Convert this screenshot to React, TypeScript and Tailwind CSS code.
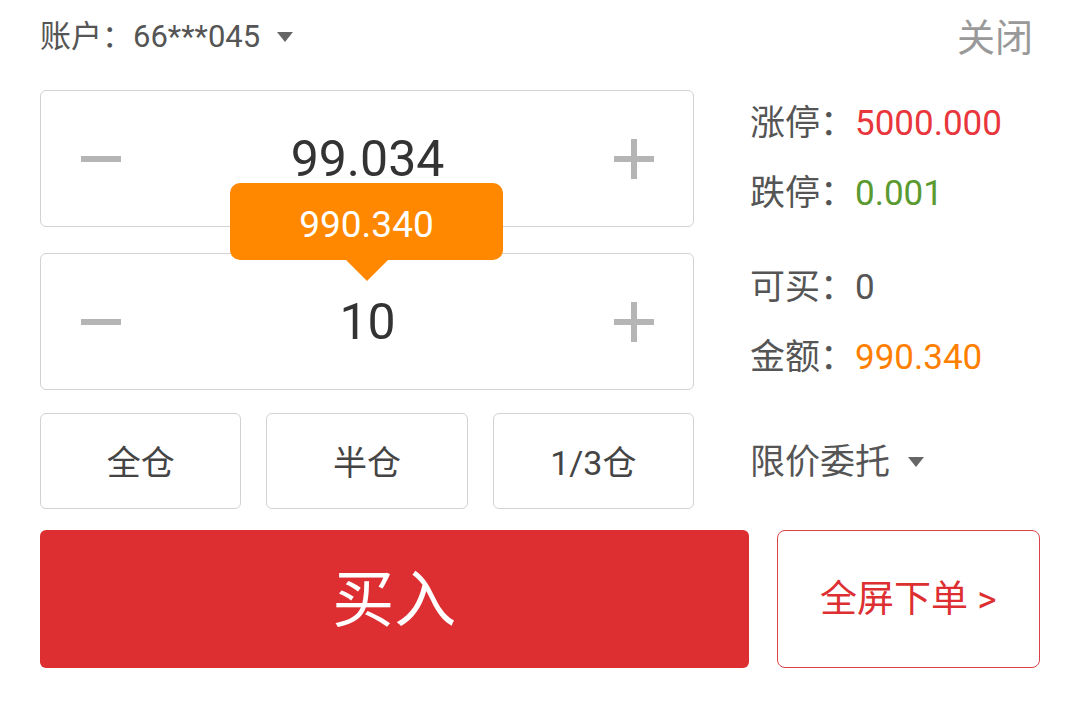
import { ReactNode } from 'react'

const font = { fontFamily: 'Roboto, "Noto Sans CJK SC", sans-serif' }

function Minus() {
  return <div className="w-[40px] h-[6px] bg-[#b5b5b5]" />
}

function Plus() {
  return (
    <div className="relative w-[40px] h-[40px]">
      <div className="absolute left-0 top-[17px] w-[40px] h-[6px] bg-[#b5b5b5]" />
      <div className="absolute top-0 left-[17px] w-[6px] h-[40px] bg-[#b5b5b5]" />
    </div>
  )
}

function Stepper({ value }: { value: string }) {
  return (
    <div className="h-[137px] border border-[#d2d2d2] rounded-[6px] flex items-center justify-between pl-[40px] pr-[39px]">
      <Minus />
      <span className="text-[50px] text-[#333] leading-none">{value}</span>
      <Plus />
    </div>
  )
}

function Info({ label, children, color }: { label: string; children: ReactNode; color: string }) {
  return (
    <div className="h-[70px] flex items-center text-[35px] leading-none">
      <span className="text-[#555]">{label}：</span>
      <span className={color}>{children}</span>
    </div>
  )
}

function Caret({ className }: { className: string }) {
  return (
    <span
      className={`inline-block w-0 h-0 border-l-[8px] border-r-[8px] border-t-[10px] border-l-transparent border-r-transparent ${className}`}
    />
  )
}

export default function App() {
  return (
    <div className="w-[1080px] h-[707px] bg-white px-[40px]" style={font}>
      <div className="h-[75px] flex items-center justify-between pb-[2px]">
        <div className="flex items-center text-[31px] text-[#555] leading-none">
          <span>账户：66***045</span>
          <Caret className="ml-[17px] border-t-[#666]" />
        </div>
        <span className="text-[38px] text-[#999] leading-none mr-[7px] mt-[2px]">关闭</span>
      </div>

      <div className="flex mt-[15px]">
        <div className="relative w-[654px]">
          <Stepper value="99.034" />
          <div className="mt-[26px]">
            <Stepper value="10" />
          </div>

          <div className="absolute left-[190px] top-[93px] w-[273px] flex flex-col items-center">
            <div className="w-full h-[77px] bg-[#ff8800] rounded-[10px] flex items-center justify-center pt-[6px] text-white text-[37px] leading-none">
              990.340
            </div>
            <div className="w-0 h-0 border-l-[21px] border-r-[21px] border-t-[21px] border-l-transparent border-r-transparent border-t-[#ff8800]" />
          </div>

          <div className="mt-[23px] grid grid-cols-3 gap-[25px]">
            {['全仓', '半仓', '1/3仓'].map((s) => (
              <div
                key={s}
                className="h-[96px] border border-[#d2d2d2] rounded-[6px] flex items-center justify-center pt-[3px] text-[34px] text-[#444] leading-none"
              >
                {s}
              </div>
            ))}
          </div>
        </div>

        <div className="ml-[56px] -mt-[2px]">
          <Info label="涨停" color="text-[#e8363c]">5000.000</Info>
          <Info label="跌停" color="text-[#5a9a30]">0.001</Info>
          <div className="mt-[24px]">
            <Info label="可买" color="text-[#555]">0</Info>
            <Info label="金额" color="text-[#ff8000]">990.340</Info>
          </div>
          <div className="mt-[35px] h-[70px] flex items-center text-[35px] text-[#555] leading-none">
            <span>限价委托</span>
            <Caret className="ml-[18px] border-t-[#666]" />
          </div>
        </div>
      </div>

      <div className="flex mt-[21px] gap-[28px]">
        <button className="w-[710px] h-[138px] bg-[#dd2f32] rounded-[6px] text-white text-[62px] leading-none flex items-center justify-center pt-[4px]">
          买入
        </button>
        <button className="w-[264px] h-[138px] border border-[#d94348] rounded-[8px] text-[#dd2f32] text-[37px] leading-none flex items-center justify-center">
          全屏下单 &gt;
        </button>
      </div>
    </div>
  )
}
